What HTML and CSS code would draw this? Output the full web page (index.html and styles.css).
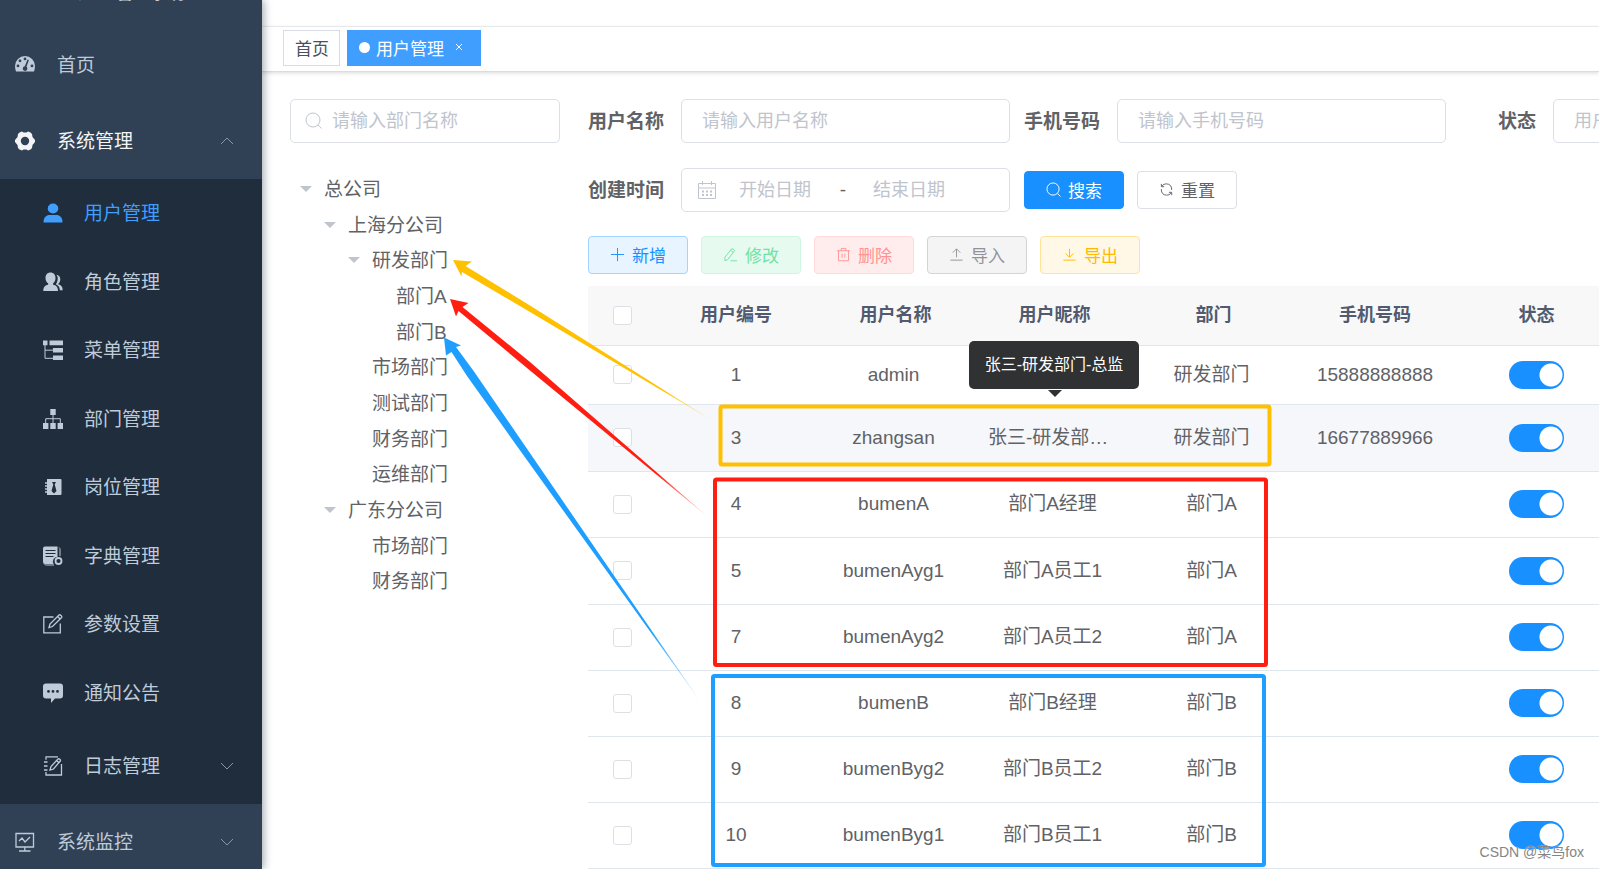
FILE: index.html
```html
<!DOCTYPE html>
<html lang="zh-CN">
<head>
<meta charset="utf-8">
<title>用户管理</title>
<link rel="stylesheet" href="styles.css">
</head>
<body>
<div class="app">
  <aside class="sidebar">
    <div class="logo">
      <svg class="logo-mark" viewBox="0 0 24 20"><path d="M0 0h5l7 12 7-12h5L12 20z" fill="#42b983"/><path d="M5 0h4l3 5 3-5h4l-7 12z" fill="#35495e"/></svg>
      <span>管理系统</span>
    </div>
    <nav class="menu">
      <a class="item" href="#">
        <svg class="icon" viewBox="0 0 20 20"><path fill="currentColor" fill-rule="evenodd" d="M10 1a10 10 0 0 0-10 10c0 2 .3 3.700 1 5.500h18c.7-1.800 1-3.500 1-5.500A10 10 0 0 0 10 1zm0 1.500a1.400 1.400 0 1 1 0 2.800 1.400 1.400 0 0 1 0-2.800zM5 4.400A1.400 1.400 0 1 1 5 7.200a1.400 1.400 0 0 1 0-2.800zM3 9.500a1.400 1.400 0 1 1 0 2.800 1.400 1.400 0 0 1 0-2.800zm14 0a1.400 1.400 0 1 1 0 2.800 1.400 1.400 0 0 1 0-2.800zM12.500 4.500l1.400.5-2.400 6.800a2.300 2.300 0 1 1-1.700-.5z"/></svg>
        <span>首页</span>
      </a>
      <a class="item open" href="#">
        <svg class="icon" viewBox="0 0 20 20"><path fill="currentColor" fill-rule="evenodd" d="M4.500 1.500L7 .5l1.500 1h3L13 .5l2.500 1L17 3l.5 3L20 9v2l-2.500 3-.5 3-1.500 1.500-2.500 1-1.500-1h-3l-1.500 1-2.500-1L3 17l-.5-3L0 11V9l2.500-3L3 3zM10 5.800a4.200 4.200 0 1 0 0 8.400 4.200 4.200 0 0 0 0-8.400z"/></svg>
        <span>系统管理</span>
        <svg class="chevron" viewBox="0 0 14 8"><path d="M1 7l6-6 6 6"/></svg>
      </a>
      <div class="submenu">
        <a class="item active" href="#">
          <svg class="icon" viewBox="0 0 20 20"><ellipse cx="10" cy="5.500" rx="5.300" ry="5" fill="currentColor"/><path fill="currentColor" d="M0.500 19.500c0-5.500 3-7.500 6-7.500h7c3 0 6 2 6 7.500z"/></svg>
          <span>用户管理</span>
        </a>
        <a class="item" href="#">
          <svg class="icon" viewBox="0 0 20 20"><path fill="currentColor" d="M7.500 0.500c3 0 5 2.200 5 5.500 0 2.500-1 4.500-2.500 5.500v1c3 1 5 2 5 6.500H.3c0-4.500 2-5.500 4.900-6.500v-1C3.500 10.500 2.500 8.500 2.500 6c0-3.300 2-5.500 5-5.500z"/><path fill="currentColor" d="M13.300 2.800c2.700.3 4 2 4 4.400 0 2-.8 3.500-2 4.500v.6c2.700 1 4.400 2.200 4.400 6h-2.900c0-3.300-1.500-4.800-4-6 1.300-1.600 1.900-3.500 1.900-6 0-1.300-.500-2.500-1.400-3.500z"/></svg>
          <span>角色管理</span>
        </a>
        <a class="item" href="#">
          <svg class="icon" viewBox="0 0 20 20"><g fill="currentColor"><path d="M0 .5h4.500v4.700H0zM6.500.5H20v4.700H6.500zM10 8h10v4.500H10zM10 15.500h10V20H10z"/></g><path d="M2 5v13.300h8M2 10.200h8" fill="none" stroke="currentColor"/></svg>
          <span>菜单管理</span>
        </a>
        <a class="item" href="#">
          <svg class="icon" viewBox="0 0 20 20"><g fill="currentColor"><path d="M7.300 0h5.400v6H7.300zM0 14h5.400v6H0zM7.300 14h5.400v6H7.300zM14.600 14H20v6h-5.400z"/></g><path d="M10 6v8M2.700 14v-4.300h14.600V14" fill="none" stroke="currentColor"/></svg>
          <span>部门管理</span>
        </a>
        <a class="item" href="#">
          <svg class="icon" viewBox="0 0 20 20"><path fill="currentColor" fill-rule="evenodd" d="M4 2h13.500a1 1 0 0 1 1 1v14a1 1 0 0 1-1 1H4zM9 5l1.300 2.500-1.800 6.500L11 16.500 13.500 14l-1.800-6.500L13 5z"/><path d="M2 6h3M2 9h3M2 12h3M2 15h3" stroke="currentColor" stroke-width="1.500"/></svg>
          <span>岗位管理</span>
        </a>
        <a class="item" href="#">
          <svg class="icon" viewBox="0 0 20 20"><path fill="currentColor" d="M0 2.500A2 2 0 0 1 2 .5h12.500V11a4.500 4.500 0 0 0-3.800 7H2.500A2.500 2.500 0 0 1 0 15.500z"/><path d="M2.500 4.500h10M2.500 7.500h10M2.500 10.500h8" stroke="#1f2d3d" /><path d="M1 17.500c.5 1 1.500 1.500 2.500 1.500H11M16 1.500c.8.500 1 1 1 2V10" fill="none" stroke="currentColor"/><circle cx="15.500" cy="15" r="3" fill="none" stroke="currentColor" stroke-width="1.800"/></svg>
          <span>字典管理</span>
        </a>
        <a class="item" href="#">
          <svg class="icon" viewBox="0 0 20 20"><path d="M10.500 3H.8v15.800h16.500V9.500M6 13.500l1-3.500 9-9c1-.8 3.500 1.300 2.600 2.500L9.500 12.500zM14.500 2.500l2.700 2.500" fill="none" stroke="currentColor" stroke-width="1.300"/></svg>
          <span>参数设置</span>
        </a>
        <a class="item" href="#">
          <svg class="icon" viewBox="0 0 20 20"><path fill="currentColor" fill-rule="evenodd" d="M3 .5h14a3 3 0 0 1 3 3v9a3 3 0 0 1-3 3h-5L8 20v-4.500H3a3 3 0 0 1-3-3v-9a3 3 0 0 1 3-3zM5.500 7a1.400 1.400 0 1 0 0 2.800 1.400 1.400 0 0 0 0-2.800zM10 7a1.400 1.400 0 1 0 0 2.800A1.400 1.400 0 0 0 10 7zm4.500 0a1.400 1.400 0 1 0 0 2.800 1.400 1.400 0 0 0 0-2.800z"/></svg>
          <span>通知公告</span>
        </a>
        <a class="item tall" href="#">
          <svg class="icon" viewBox="0 0 20 20"><path d="M15 .8H3v3M3 16v3h15.500V8M1 6h3.500M1 10h3.500M1 14h3.500M7 14l1-3.500L15 3c1-.8 3 .8 2.300 2L10.500 13zM13.500 4.500l2.500 2.300" fill="none" stroke="currentColor" stroke-width="1.300"/></svg>
          <span>日志管理</span>
          <svg class="chevron" viewBox="0 0 14 8"><path d="M1 1l6 6 6-6"/></svg>
        </a>
      </div>
      <a class="item" href="#">
        <svg class="icon" viewBox="0 0 20 20"><path d="M1 1.500h17.500V15H1zM9.800 15v4M4 19h11.500M4 9l3-3 3 4 5-5" fill="none" stroke="currentColor" stroke-width="1.300"/></svg>
        <span>系统监控</span>
        <svg class="chevron" viewBox="0 0 14 8"><path d="M1 1l6 6 6-6"/></svg>
      </a>
    </nav>
  </aside>

  <main class="main">
    <header class="navbar"></header>
    <nav class="tags">
      <a class="tag" href="#">首页</a>
      <a class="tag current" href="#"><i class="dot"></i>用户管理<svg class="close" viewBox="0 0 8 8"><path d="M1 1l6 6M7 1L1 7"/></svg></a>
    </nav>

    <div class="content">
      <section class="depts">
        <label class="field search">
          <svg class="field-icon" viewBox="0 0 18 18"><circle cx="8" cy="8" r="7"/><path d="M13 13l3.500 3.500"/></svg>
          <input type="text" aria-label="部门名称" placeholder="请输入部门名称">
        </label>
        <ul class="tree">
          <li class="l1 caret">总公司</li>
          <li class="l2 caret">上海分公司</li>
          <li class="l3 caret">研发部门</li>
          <li class="l4">部门A</li>
          <li class="l4">部门B</li>
          <li class="l3">市场部门</li>
          <li class="l3">测试部门</li>
          <li class="l3">财务部门</li>
          <li class="l3">运维部门</li>
          <li class="l2 caret">广东分公司</li>
          <li class="l3">市场部门</li>
          <li class="l3">财务部门</li>
        </ul>
      </section>

      <section class="users">
        <form class="filters">
          <div class="line">
            <label for="uname">用户名称</label>
            <div class="field wide"><input id="uname" type="text" placeholder="请输入用户名称"></div>
            <label for="phone">手机号码</label>
            <div class="field wide phone"><input id="phone" type="text" placeholder="请输入手机号码"></div>
            <label for="status">状态</label>
            <div class="field wide"><input id="status" type="text" placeholder="用户状态"></div>
          </div>
          <div class="line">
            <label for="from">创建时间</label>
            <div class="field wide range">
              <svg class="field-icon" viewBox="0 0 18 18"><path d="M.5 2.500h17v15H.5zM.5 7h17M4.500 0v4M13.500 0v4"/><path d="M4 10.500h10M4 14h10" stroke-width="2" stroke-dasharray="2 2"/></svg>
              <input id="from" type="text" placeholder="开始日期">
              <span>-</span>
              <input type="text" aria-label="结束日期" placeholder="结束日期">
            </div>
            <button class="btn primary" type="button"><svg viewBox="0 0 16 16"><circle cx="7.500" cy="7.500" r="6.500"/><path d="M12 12l3.500 3.500"/></svg>搜索</button>
            <button class="btn plain" type="button"><svg viewBox="0 0 16 16"><path d="M3 4.500C4.500 2.500 6 2 8 2c3.500 0 5.500 2.500 5.500 5.500v1M2.500 2v3h3M13 11.500c-1.500 2-3 2.500-5 2.500-3.500 0-5.500-2.500-5.500-5.500v-1M13.500 14v-3h-3"/></svg>重置</button>
          </div>
        </form>

        <div class="toolbar">
          <button class="btn add" type="button"><svg viewBox="0 0 16 16"><path d="M8 1v14M1 8h14"/></svg>新增</button>
          <button class="btn edit" type="button"><svg viewBox="0 0 16 16"><path d="M2 14.500V11l7.500-9.500 3 2.200L5 13.500zM8 3.500l3 2.200M8 14.700h7"/></svg>修改</button>
          <button class="btn del" type="button"><svg viewBox="0 0 16 16"><path d="M1 4h14M5.500 4V1.500h5V4M2.700 4v10.700h10.600V4M6.500 7v4.500M9.500 7v4.500"/></svg>删除</button>
          <button class="btn imp" type="button"><svg viewBox="0 0 16 16"><path d="M8 11V2M4 6l4-4 4 4M1.500 14h13"/></svg>导入</button>
          <button class="btn exp" type="button"><svg viewBox="0 0 16 16"><path d="M8 2v8.500M4 7l4 4 4-4M1.500 14h13"/></svg>导出</button>
        </div>

        <table class="grid">
          <colgroup><col class="c-check"><col class="c-id"><col class="c-text"><col class="c-text"><col class="c-text"><col class="c-phone"><col class="c-text"></colgroup>
          <thead>
            <tr><th><input type="checkbox" aria-label="全选"></th><th>用户编号</th><th>用户名称</th><th>用户昵称</th><th>部门</th><th>手机号码</th><th>状态</th></tr>
          </thead>
          <tbody>
            <tr class="first"><td><input type="checkbox" aria-label="选择 1"></td><td>1</td><td>admin</td><td></td><td>研发部门</td><td>15888888888</td><td><input class="switch" type="checkbox" checked aria-label="状态 1"></td></tr>
            <tr class="hover"><td><input type="checkbox" aria-label="选择 3"></td><td>3</td><td>zhangsan</td><td class="nick">张三-研发部门-总监</td><td>研发部门</td><td>16677889966</td><td><input class="switch" type="checkbox" checked aria-label="状态 3"></td></tr>
            <tr><td><input type="checkbox" aria-label="选择 4"></td><td>4</td><td>bumenA</td><td>部门A经理</td><td>部门A</td><td></td><td><input class="switch" type="checkbox" checked aria-label="状态 4"></td></tr>
            <tr><td><input type="checkbox" aria-label="选择 5"></td><td>5</td><td>bumenAyg1</td><td>部门A员工1</td><td>部门A</td><td></td><td><input class="switch" type="checkbox" checked aria-label="状态 5"></td></tr>
            <tr><td><input type="checkbox" aria-label="选择 7"></td><td>7</td><td>bumenAyg2</td><td>部门A员工2</td><td>部门A</td><td></td><td><input class="switch" type="checkbox" checked aria-label="状态 7"></td></tr>
            <tr><td><input type="checkbox" aria-label="选择 8"></td><td>8</td><td>bumenB</td><td>部门B经理</td><td>部门B</td><td></td><td><input class="switch" type="checkbox" checked aria-label="状态 8"></td></tr>
            <tr><td><input type="checkbox" aria-label="选择 9"></td><td>9</td><td>bumenByg2</td><td>部门B员工2</td><td>部门B</td><td></td><td><input class="switch" type="checkbox" checked aria-label="状态 9"></td></tr>
            <tr><td><input type="checkbox" aria-label="选择 10"></td><td>10</td><td>bumenByg1</td><td>部门B员工1</td><td>部门B</td><td></td><td><input class="switch" type="checkbox" checked aria-label="状态 10"></td></tr>
          </tbody>
        </table>
      </section>
    </div>
  </main>

  <div class="tooltip" role="tooltip">张三-研发部门-总监</div>

  <svg class="marks" width="1599" height="869" viewBox="0 0 1599 869" aria-hidden="true">
    <defs>
      <linearGradient id="gy" gradientUnits="userSpaceOnUse" x1="453" y1="260" x2="713" y2="421"><stop offset="0.8" stop-color="#ffc000"/><stop offset="1" stop-color="#ffc000" stop-opacity="0.2"/></linearGradient>
      <linearGradient id="gr" gradientUnits="userSpaceOnUse" x1="450" y1="299" x2="708" y2="517"><stop offset="0.8" stop-color="#ff1f12"/><stop offset="1" stop-color="#ff1f12" stop-opacity="0.2"/></linearGradient>
      <linearGradient id="gb" gradientUnits="userSpaceOnUse" x1="444" y1="337" x2="700" y2="701"><stop offset="0.8" stop-color="#1e9fff"/><stop offset="1" stop-color="#1e9fff" stop-opacity="0.2"/></linearGradient>
    </defs>
    <path fill="url(#gy)" d="M453 260l19 1.500-6.500 4.500L530 305.500 713 421 530 312l-68-40-.500 4.500z"/>
    <path fill="url(#gr)" d="M450 299l18.500 4-6 4L530 362 708 517 530 370.500 458.500 311l-2.500 5.500z"/>
    <path fill="url(#gb)" d="M444 337.500l17 8-5 1.500 18 24.500L522 441.500 700 701 516.500 445.500 467 376l-15.500-24-5.500 3.500z"/>
    <rect x="720.500" y="406.500" width="549" height="58" rx="1.500" fill="none" stroke="#ffc000" stroke-width="4"/>
    <rect x="715" y="479.500" width="551" height="185.500" rx="1.500" fill="none" stroke="#ff1f12" stroke-width="4"/>
    <rect x="713" y="676" width="551" height="189" rx="1.500" fill="none" stroke="#1e9fff" stroke-width="4"/>
  </svg>
  <div class="watermark">CSDN @菜鸟fox</div>
</div>
</body>
</html>
```
FILE: styles.css
```css
* { box-sizing: border-box; }

body {
  margin: 0;
  font-family: "Liberation Sans", "Noto Sans CJK SC", sans-serif;
  font-size: 19px;
  color: #606266;
  background: #fff;
  overflow: hidden;
}

a { color: inherit; text-decoration: none; }

.app { position: relative; display: flex; height: 100vh; overflow: hidden; }

/* Sidebar */
.sidebar {
  position: relative;
  z-index: 2;
  flex: 0 0 262px;
  background: #304156;
  color: #bfcbd9;
  box-shadow: 2px 0 8px rgba(0, 21, 41, 0.35);
}

.logo {
  display: flex;
  align-items: center;
  gap: 24px;
  height: 70px;
  margin-top: -43px;
  padding: 0 0 2px 68px;
  font-size: 17px;
  font-weight: bold;
  color: #c3cad2;
}
.logo-mark { width: 24px; height: 20px; }

.item {
  display: flex;
  align-items: center;
  height: 76px;
  padding: 0 28px 0 15px;
}
.item span { flex: 1; padding-bottom: 3px; }
.icon { width: 20px; height: 20px; margin-right: 22px; }
.chevron { width: 14px; height: 8px; fill: none; stroke: #8795a6; }
.open { color: #f4f4f5; }

.submenu { background: #1f2d3d; }
.submenu .item { height: 68px; padding-left: 43px; }
.submenu .icon { margin-right: 21px; }
.submenu .item:nth-child(even) { height: 69px; }
.submenu .tall { height: 77px; }
.submenu .active { color: #409eff; }

/* Page header */
.main { flex: 1; min-width: 0; overflow: hidden; }

.navbar { height: 27px; border-bottom: 1px solid #f0f1f2; }

.tags {
  display: flex;
  align-items: center;
  gap: 7px;
  height: 45px;
  padding: 0 21px 2px;
  border-bottom: 1px solid #d8dce5;
  box-shadow: 0 1px 4px rgba(0, 0, 0, 0.15);
  font-size: 17px;
}
.tag {
  display: flex;
  align-items: center;
  height: 36px;
  padding: 0 10px 2px 11px;
  border: 1px solid #d8dce5;
  color: #495060;
}
.current { padding-right: 17px; background: #409eff; border-color: #409eff; color: #fff; }
.dot { width: 11px; height: 11px; margin-right: 6px; border-radius: 50%; background: #fff; }
.close { width: 8px; height: 8px; margin-left: 11px; fill: none; stroke: #fff; }

.content { display: flex; gap: 28px; padding: 27px 0 0 28px; }

/* Fields */
.field {
  display: flex;
  align-items: center;
  height: 44px;
  border: 1px solid #dcdfe6;
  border-radius: 5px;
}
.field input {
  flex: 1;
  width: 100%;
  min-width: 0;
  padding: 1px 0 0;
  border: 0;
  outline: 0;
  background: transparent;
  font: inherit;
  font-size: 18px;
  color: #606266;
}
.field input::placeholder { color: #c0c4cc; opacity: 1; }
.field-icon { flex: none; width: 18px; height: 18px; fill: none; stroke: #c0c4cc; }
.wide { flex: 0 0 329px; margin-right: 14px; padding: 0 20px; }

/* Department tree */
.depts { flex: 0 0 270px; }
.search { gap: 9px; padding: 0 14px; }

.tree { margin: 28px 0 0; padding: 0; list-style: none; }
.tree li {
  display: flex;
  align-items: center;
  height: 36px;
  padding-bottom: 4px;
}
.tree li:nth-child(3n) { height: 35px; }
.tree li::before {
  content: "";
  width: 0;
  height: 0;
  margin: 3px 12px 0 0;
  border: 6px solid transparent;
  border-bottom-width: 0;
}
.tree .caret::before { border-top-color: #c0c4cc; }
.tree .l1 { padding-left: 10px; }
.tree .l2 { padding-left: 34px; }
.tree .l3 { padding-left: 58px; }
.tree .l4 { padding-left: 82px; }

/* Filters */
.users { flex: 1; min-width: 0; overflow: visible; }
.filters { display: flex; flex-direction: column; gap: 25px; margin-bottom: 24px; }
.line { display: flex; align-items: center; height: 44px; white-space: nowrap; }
.line label { flex: none; margin-right: 17px; padding-bottom: 3px; font-weight: bold; }
.phone { margin-right: 52px; }
.range { padding: 0 16px; }
.range .field-icon { margin-right: 23px; }
.range input { flex: 0 0 80px; }
.range span { width: 36px; margin: 0 12px 0 6px; text-align: center; }

/* Buttons */
.btn {
  flex: none;
  display: inline-flex;
  align-items: center;
  justify-content: center;
  gap: 7px;
  width: 100px;
  height: 38px;
  padding: 0 0 2px;
  border: 1px solid;
  border-radius: 4px;
  font: inherit;
  font-size: 17px;
}
.btn svg { width: 15px; height: 15px; fill: none; stroke: currentColor; }
.toolbar { display: flex; gap: 13px; margin-bottom: 12px; }
.primary { margin-right: 13px; background: #1890ff; border-color: #1890ff; color: #fff; }
.plain { background: #fff; border-color: #dcdfe6; color: #606266; }
.add { background: #e8f4ff; border-color: #a3d3ff; color: #1890ff; }
.edit { background: #e7faf0; border-color: #d0f5e0; color: #71e2a3; }
.del { background: #ffeded; border-color: #ffdbdb; color: #ff9292; }
.imp { background: #f4f4f5; border-color: #d3d4d6; color: #909399; }
.exp { background: #fff8e6; border-color: #ffe399; color: #ffba00; }

/* User table */
.grid { table-layout: fixed; width: 1027px; border-collapse: collapse; line-height: 28px; }
.c-check { width: 68px; }
.c-id { width: 160px; }
.c-text { width: 159px; }
.c-phone { width: 164px; }

.grid th, .grid td {
  padding: 0 13px;
  border-bottom: 1px solid #dfe6ec;
  text-align: center;
  white-space: nowrap;
  vertical-align: middle;
}
.grid th { height: 59px; background: #f8f8f9; color: #515a6e; font-size: 18px; }
.grid td { height: 66px; }
.grid td:nth-child(3), .grid td:nth-child(4), .grid td:nth-child(5) { padding-right: 17px; }
.grid .first td { height: 59px; }
.grid .hover td { height: 67px; background: #f5f7fa; }
.grid tr:nth-child(4) td { height: 67px; }

.grid .nick { overflow: hidden; text-overflow: ellipsis; }

.grid input {
  appearance: none;
  display: block;
  width: 19px;
  height: 19px;
  margin: 0 auto;
  border: 1px solid #dcdfe6;
  border-radius: 3px;
  background: #fff;
}
.grid .switch {
  width: 55px;
  height: 28px;
  border: 0;
  border-radius: 14px;
  background: radial-gradient(circle at 42px 14px, #fff 11px, #1890ff 12px);
}

.tooltip {
  position: absolute;
  left: 969px;
  top: 341px;
  width: 170px;
  height: 48px;
  border-radius: 5px;
  background: #303133;
  color: #fff;
  font-size: 16px;
  line-height: 48px;
  text-align: center;
}
.tooltip::after {
  content: "";
  position: absolute;
  left: 79px;
  top: 49px;
  border: 7px solid transparent;
  border-bottom-width: 0;
  border-top-color: #303133;
}

/* Annotation layer */
.marks { position: absolute; left: 0; top: 0; z-index: 3; pointer-events: none; }
.watermark {
  position: absolute;
  right: 15px;
  bottom: 8px;
  z-index: 4;
  font-size: 14px;
  color: #858585;
  text-shadow: 0 0 1px #fff;
}
```
